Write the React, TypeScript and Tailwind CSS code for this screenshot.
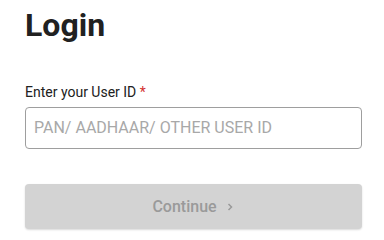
import React from "react";

export default function App() {
  return (
    <div className="w-[384px] h-[237px] bg-white overflow-hidden font-['Roboto',sans-serif]">
      <div className="pl-[25px] pr-[22px] pt-[5px]">
        <h1 className="text-[32px] leading-[40px] font-bold text-[#212121]">Login</h1>
        <label className="block mt-[38px] text-[14px] leading-[18px] text-[#212121]">
          Enter your User ID <span className="text-[#d32f2f]">*</span>
        </label>
        <div className="mt-[6px] h-[42px] rounded-[4px] border border-[#9e9e9e] flex items-center px-[8px]">
          <input
            className="w-full outline-none text-[16px] text-[#212121] placeholder:text-[#a8a8a8] bg-transparent"
            placeholder="PAN/ AADHAAR/ OTHER USER ID"
          />
        </div>
        <button className="mt-[35px] w-full h-[45px] rounded-[4px] bg-[#d3d3d3] shadow-[0_1px_2px_rgba(0,0,0,0.15)] flex items-center justify-center gap-[8px] text-[16px] font-medium text-[#9a9a9a]">
          <span>Continue</span>
          <svg width="10" height="10" viewBox="0 0 10 10" fill="none" stroke="#9a9a9a" strokeWidth="1.5">
            <path d="M3.5 2 L6.5 5 L3.5 8" />
          </svg>
        </button>
      </div>
    </div>
  );
}
